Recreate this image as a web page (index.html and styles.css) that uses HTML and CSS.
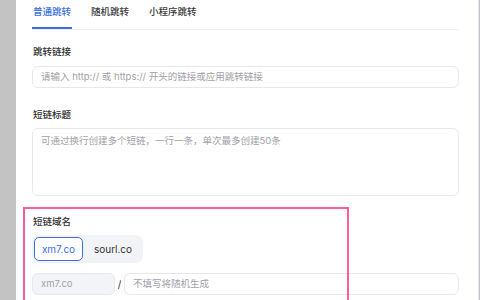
FILE: index.html
```html
<!DOCTYPE html>
<html lang="zh">
<head>
<meta charset="utf-8">
<link rel="stylesheet" href="styles.css">
</head>
<body>
<div class="gutter"></div>
<main class="panel">
  <nav class="tabs">
    <span class="tab active">普通跳转</span>
    <span class="tab">随机跳转</span>
    <span class="tab">小程序跳转</span>
  </nav>
  <section class="field first">
    <div class="label">跳转链接</div>
    <div class="input"><span class="ph">请输入 http:// 或 https:// 开头的链接或应用跳转链接</span></div>
  </section>
  <section class="field">
    <div class="label">短链标题</div>
    <div class="textarea"><span class="ph">可通过换行创建多个短链，一行一条，单次最多创建50条</span></div>
  </section>
  <section class="field domain">
    <div class="label">短链域名</div>
    <div class="segmented">
      <span class="seg selected">xm7.co</span>
      <span class="seg">sourl.co</span>
    </div>
    <div class="row">
      <div class="input prefix"><span class="ph">xm7.co</span></div>
      <span class="slash">/</span>
      <div class="input grow"><span class="ph">不填写将随机生成</span></div>
    </div>
    <div class="highlight"></div>
  </section>
</main>
<div class="gutter right"></div>
</body>
</html>
```

FILE: styles.css
```css
html, body {
  margin: 0;
  height: 300px;
  overflow: hidden;
}
body {
  display: flex;
  background: #c3c3c3;
  font-family: "Inter", "Noto Sans CJK SC", sans-serif;
  font-size: 9.5px;
  color: #333;
}
.gutter {
  width: 16px;
  flex: none;
}
.gutter.right {
  flex: 1;
}
.panel {
  width: 427px;
  flex: none;
  background: #fff;
  padding: 0 19px 0 16px;
  border-right: 1px solid #dde5f6;
  position: relative;
}
.tabs {
  display: flex;
  gap: 18px;
  height: 29px;
  border-bottom: 1px solid #eef0f4;
}
.tab {
  height: 27px;
  line-height: 24px;
  padding: 0 1px;
  color: #3a3a3a;
  font-weight: 500;
  border-bottom: 2px solid transparent;
}
.tab.active {
  color: #3c6fe6;
  border-bottom-color: #3c6fe6;
}
.field {
  margin-top: 20px;
  position: relative;
}
.field.first {
  margin-top: 15px;
}
.field.domain {
  margin-top: 19px;
}
.label {
  height: 14px;
  line-height: 14px;
  margin-bottom: 6px;
  padding-left: 1px;
  color: #2e2e2e;
  font-weight: 500;
}
.field.first .label {
  margin-bottom: 7px;
}
.input {
  box-sizing: border-box;
  height: 22px;
  border: 1px solid #e6e8ee;
  border-radius: 6px;
  padding: 0 8px;
  display: flex;
  align-items: center;
}
.textarea {
  box-sizing: border-box;
  height: 68px;
  border: 1px solid #e6e8ee;
  border-radius: 6px;
  padding: 5px 8px;
}
.ph {
  color: #9fa1a8;
  line-height: 14px;
  white-space: nowrap;
}
.segmented {
  display: inline-flex;
  box-sizing: border-box;
  height: 28px;
  padding: 2px;
  background: #f2f3f7;
  border-radius: 7px;
  gap: 2px;
}
.seg {
  box-sizing: border-box;
  display: flex;
  align-items: center;
  justify-content: center;
  height: 24px;
  border-radius: 5px;
  color: #333;
  font-size: 10px;
}
.seg.selected {
  width: 49px;
  background: #fff;
  border: 1px solid #3c6fe6;
  color: #3c6fe6;
}
.seg:not(.selected) {
  width: 56px;
}
.row {
  display: flex;
  align-items: center;
  margin-top: 10px;
}
.input.prefix {
  width: 83px;
  background: #f3f4f7;
  flex: none;
}
.slash {
  width: 9px;
  text-align: center;
  color: #333;
  font-size: 10px;
}
.input.grow {
  flex: 1;
}
.highlight {
  position: absolute;
  left: -9px;
  top: -8px;
  width: 322px;
  height: 100px;
  border: 2px solid #ff5e93;
}
```
